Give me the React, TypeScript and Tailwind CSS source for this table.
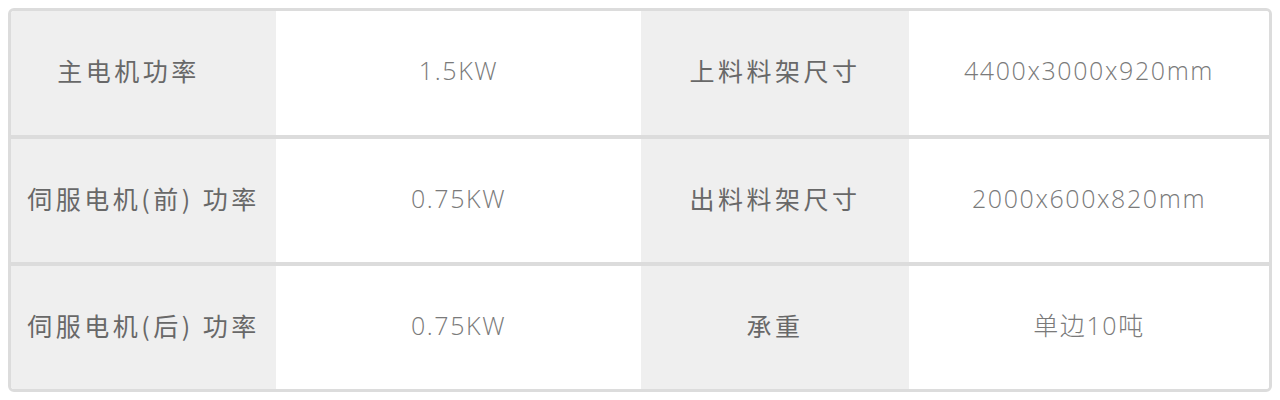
// 参数表 — 设备规格（主电机 / 伺服电机 / 料架尺寸）

const rows: { label: string; value: string; label2: string; value2: string; labelPad?: string }[] = [
  { label: '主电机功率', value: '1.5KW', label2: '上料料架尺寸', value2: '4400x3000x920mm', labelPad: 'pr-[30px]' },
  { label: '伺服电机(前) 功率', value: '0.75KW', label2: '出料料架尺寸', value2: '2000x600x820mm' },
  { label: '伺服电机(后) 功率', value: '0.75KW', label2: '承重', value2: '单边10吨' },
];

const labelFont = "font-['Noto_Sans_CJK_SC','Noto_Sans',sans-serif]";
const valueFont = "font-['Open_Sans','Noto_Sans_CJK_SC',sans-serif]";

function LabelCell({ text, pad = '' }: { text: string; pad?: string }) {
  return (
    <div
      className={`flex items-center justify-center bg-[#efefef] pb-1 text-[25px] tracking-[3.5px] text-[#686868] ${labelFont} ${pad}`}
    >
      <span className="whitespace-pre">{text}</span>
    </div>
  );
}

function ValueCell({ text }: { text: string }) {
  return (
    <div
      className={`flex items-center justify-center bg-white pb-1 text-[25px] font-light tracking-[1.6px] text-[#7a7a7a] ${valueFont}`}
    >
      {text}
    </div>
  );
}

export default function App() {
  return (
    <div className="bg-white p-2">
      <div className="overflow-hidden rounded-md border-[3px] border-[#dcdcdc]">
        {rows.map((r, i) => (
          <div
            key={i}
            className={`grid grid-cols-[265px_365px_268px_1fr] ${i > 0 ? 'h-[127px] border-t-4 border-[#dcdcdc]' : 'h-[124px]'}`}
          >
            <LabelCell text={r.label} pad={r.labelPad} />
            <ValueCell text={r.value} />
            <LabelCell text={r.label2} />
            <ValueCell text={r.value2} />
          </div>
        ))}
      </div>
    </div>
  );
}
